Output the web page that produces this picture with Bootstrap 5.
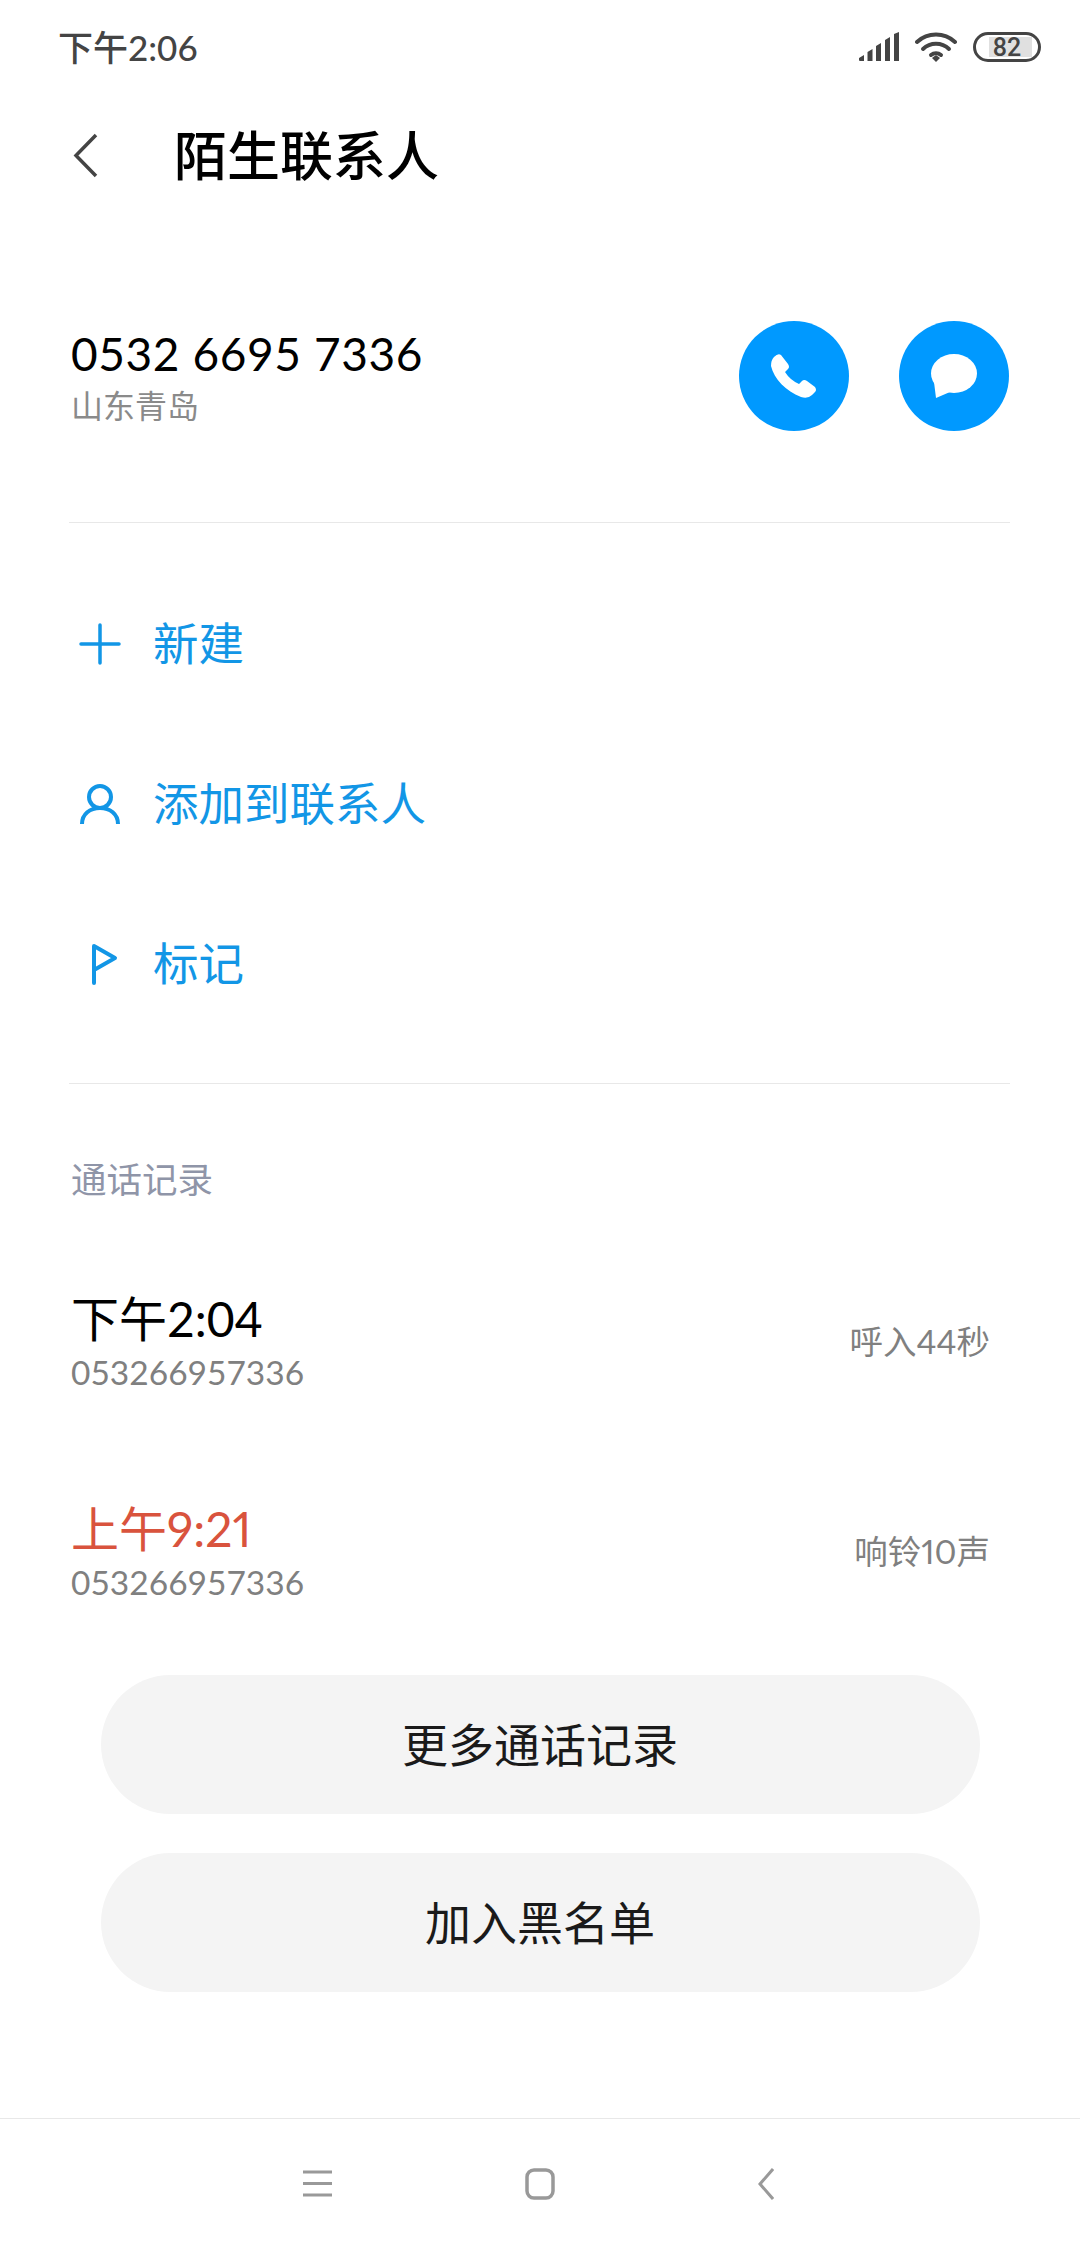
<!DOCTYPE html>
<html lang="zh">
<head>
<meta charset="UTF-8">
<title>陌生联系人</title>
<link href="https://cdn.jsdelivr.net/npm/bootstrap@5.3.0/dist/css/bootstrap.min.css" rel="stylesheet">
<style>
  body { background: #fff; width: 1080px; height: 2248px; font-family: "Lato", "Noto Sans CJK SC", sans-serif; color: #000; overflow: hidden; }
  .screen { height: 2248px; }
  .status-row { height: 94px; padding: 0 39px 0 58px; }
  .status-time { font-size: 35px; color: #444; font-weight: 500; }
  .status-icons { gap: 16px; }
  .title-row { height: 122px; padding-left: 72px; gap: 76px; }
  .title-text { font-size: 53px; font-weight: 500; line-height: 1; }
  .number-row { height: 306px; padding: 14px 71px 0 71px; }
  .number-text { font-size: 46px; line-height: 56px; letter-spacing: .6px; }
  .region-text { font-size: 32px; line-height: 42px; margin-top: 3px; color: #8a8a8a; }
  .act-group { gap: 50px; }
  .round-act { width: 110px; height: 110px; background: #0099ff; }
  .rule-line { height: 1px; background: #e8e8e8; margin: 0 70px 0 69px; }
  .action-list { padding: 41px 0 39px; }
  .action-row { height: 160px; padding-left: 79px; gap: 32px; color: #1296e6; font-size: 45.500px; }
  .action-ico { width: 42px; height: 42px; flex: none; }
  .section-label { font-size: 35.500px; color: #8f95a8; padding: 74px 0 0 71px; line-height: 44px; }
  .call-row { height: 210px; padding: 0 90px 0 71px; }
  .call-first { margin-top: 34px; }
  .call-time { font-size: 48px; line-height: 58px; }
  .call-missed { color: #d9533d; font-variant-numeric: proportional-nums; }
  .call-num { font-size: 33.500px; line-height: 42px; margin-top: 3px; color: #808080; }
  .call-info { font-size: 33.500px; color: #808080; font-variant-numeric: proportional-nums; }
  .pill-group { gap: 39px; margin-top: 19px; }
  .pill-btn { width: 879px; height: 139px; border-radius: 70px; background: #f4f4f4; border: 0; font-size: 46px; color: #1a1a1a; }
  .nav-strip { height: 130px; border-top: 1px solid #e8e8e8; padding-left: 303px; }
  .nav-home { margin: 0 203px 0 193px; }
</style>
</head>
<body>
<div class="screen d-flex flex-column">
  <div class="status-row d-flex align-items-center justify-content-between">
    <span class="status-time">下午2:06</span>
    <div class="status-icons d-flex align-items-center">
      <svg width="40" height="30" viewBox="0 0 40 30" fill="#444"><path d="M0 26l5-3v6H1a1 1 0 0 1-1-1zM8.500 20l5-3v12h-5zM17 14l5-3v18h-5zM26 8l5-3v24h-5zM35 2l5-2v29h-5z"/></svg>
      <svg width="42" height="30" viewBox="0 0 42 30" fill="none" stroke="#444" stroke-width="4" stroke-linecap="round"><path d="M2 10a28 28 0 0 1 38 0"/><path d="M8 17a19 19 0 0 1 26 0"/><path d="M16 23a8 8 0 0 1 10 0"/><path d="M17 26l4-3 4 3-4 4z" fill="#444" stroke="none"/></svg>
      <svg width="68" height="30" viewBox="0 0 68 30"><rect x="1.500" y="1.500" width="65" height="27" rx="13.500" fill="#fff" stroke="#444" stroke-width="3"/><rect x="16" y="5" width="43" height="20" fill="#e0e0e0"/><text x="34" y="24" font-size="25" font-weight="500" text-anchor="middle" fill="#444" font-family="Roboto">82</text></svg>
    </div>
  </div>
  <div class="title-row d-flex align-items-center">
    <svg width="26" height="47" viewBox="0 0 26 47" fill="none" stroke="#444" stroke-width="3.500"><path d="M24 3 4 23.500 24 44"/></svg>
    <span class="title-text">陌生联系人</span>
  </div>
  <div class="number-row d-flex align-items-center justify-content-between">
    <div>
      <div class="number-text">0532 6695 7336</div>
      <div class="region-text">山东青岛</div>
    </div>
    <div class="act-group d-flex">
      <div class="round-act rounded-circle d-flex align-items-center justify-content-center">
        <svg width="46" height="46" viewBox="0 0 46 46" fill="#fff"><path d="M3 4Q7 0 10 2L17 11Q19 14 17 16L14 19Q19 27 28 31L31 28Q33 26 36 28L44 34Q46 37 44 39L41 42Q37 46 30 44C15 38 3 26 0 13Q0 7 3 4Z"/></svg>
      </div>
      <div class="round-act rounded-circle d-flex align-items-center justify-content-center">
        <svg width="46" height="44" viewBox="0 0 46 44" fill="#fff"><ellipse cx="23" cy="19.500" rx="23" ry="19.500"/><path d="M3 28 5 44l14-6z"/></svg>
      </div>
    </div>
  </div>
  <div class="rule-line"></div>
  <div class="action-list">
    <div class="action-row d-flex align-items-center">
      <svg class="action-ico" viewBox="0 0 42 42" stroke="#1296e6" stroke-width="3.500" stroke-linecap="round"><path d="M21 2v38M2 21h38"/></svg>
      <span>新建</span>
    </div>
    <div class="action-row d-flex align-items-center">
      <svg class="action-ico" viewBox="0 0 42 42" fill="none" stroke="#1296e6" stroke-width="4"><circle cx="21" cy="14" r="11"/><path d="M3 41C3 31 11 25 21 25S39 31 39 41"/></svg>
      <span>添加到联系人</span>
    </div>
    <div class="action-row d-flex align-items-center">
      <svg class="action-ico" viewBox="0 0 42 42" fill="none" stroke="#1296e6" stroke-width="4" stroke-linecap="round" stroke-linejoin="round"><path d="M15 40V3L36 15 15 27"/></svg>
      <span>标记</span>
    </div>
  </div>
  <div class="rule-line"></div>
  <div class="section-label">通话记录</div>
  <div class="call-row call-first d-flex align-items-center justify-content-between">
    <div><div class="call-time">下午2:04</div><div class="call-num">053266957336</div></div>
    <div class="call-info">呼入44秒</div>
  </div>
  <div class="call-row d-flex align-items-center justify-content-between">
    <div><div class="call-time call-missed">上午9:21</div><div class="call-num">053266957336</div></div>
    <div class="call-info">响铃10声</div>
  </div>
  <div class="pill-group d-flex flex-column align-items-center">
    <button class="pill-btn">更多通话记录</button>
    <button class="pill-btn">加入黑名单</button>
  </div>
  <div class="flex-grow-1"></div>
  <div class="nav-strip d-flex align-items-center">
    <svg width="29" height="27" viewBox="0 0 29 27" stroke="#999" stroke-width="3"><path d="M0 2h29M0 13.500h29M0 25h29"/></svg>
    <svg class="nav-home" width="30" height="32" viewBox="0 0 30 32" fill="none" stroke="#999" stroke-width="3.500"><rect x="2" y="2" width="26" height="28" rx="7"/></svg>
    <svg width="16" height="32" viewBox="0 0 16 32" fill="none" stroke="#999" stroke-width="3"><path d="M15 1 2 16l13 15"/></svg>
  </div>
</div>
<script src="https://cdn.jsdelivr.net/npm/bootstrap@5.3.0/dist/js/bootstrap.bundle.min.js"></script>
</body>
</html>
